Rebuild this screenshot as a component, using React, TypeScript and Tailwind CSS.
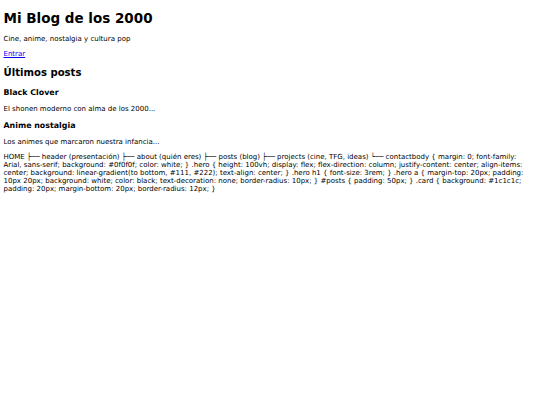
import React from 'react';

// Plain, unstyled blog page as a browser renders it (scaled to a 540px window)
const posts = [
  { title: 'Black Clover', excerpt: 'El shonen moderno con alma de los 2000...' },
  { title: 'Anime nostalgia', excerpt: 'Los animes que marcaron nuestra infancia...' },
];

const notes =
  'HOME ├── header (presentación) ├── about (quién eres) ├── posts (blog) ├── projects (cine, TFG, ideas) └── contactbody { margin: 0; font-family: Arial, sans-serif; background: #0f0f0f; color: white; } .hero { height: 100vh; display: flex; flex-direction: column; justify-content: center; align-items: center; background: linear-gradient(to bottom, #111, #222); text-align: center; } .hero h1 { font-size: 3rem; } .hero a { margin-top: 20px; padding: 10px 20px; background: white; color: black; text-decoration: none; border-radius: 10px; } #posts { padding: 50px; } .card { background: #1c1c1c; padding: 20px; margin-bottom: 20px; border-radius: 12px; }';

export default function App() {
  return (
    <div className="min-h-[405px] bg-white text-black font-['DejaVu_Sans',sans-serif] text-[7px] leading-[normal]">
      <div className="px-[3.5px] py-[0.1px]">
        <h1 className="text-[13.5px] font-bold my-[9.5px]">Mi Blog de los 2000</h1>
        <p className="my-[7px]">Cine, anime, nostalgia y cultura pop</p>
        <p className="my-[7px]">
          <a href="#" className="text-[#0000ee] underline">
            Entrar
          </a>
        </p>

        <section>
          <h2 className="text-[10.1px] font-bold mt-[8.6px] mb-[10px]">Últimos posts</h2>
          {posts.map((post) => (
            <div key={post.title}>
              <h3 className="text-[7.9px] font-bold my-[8.1px]">{post.title}</h3>
              <p className="my-[7px]">{post.excerpt}</p>
            </div>
          ))}
        </section>

        <p className="my-[7px]">{notes}</p>
      </div>
    </div>
  );
}
